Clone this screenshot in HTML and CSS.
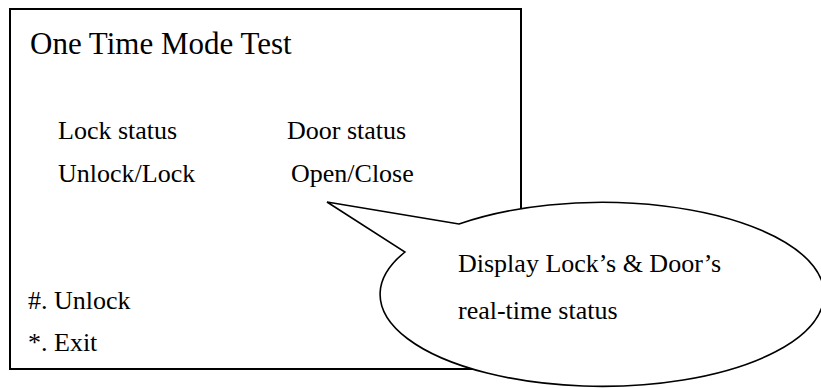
FILE: index.html
```html
<!DOCTYPE html>
<html lang="en">
<head>
<meta charset="utf-8">
<title>One Time Mode Test</title>
<link rel="stylesheet" href="styles.css">
</head>
<body>
<div class="page">
  <div class="screen">
    <div class="title">One Time Mode Test</div>
    <div class="status">
      <div class="cell">Lock status</div>
      <div class="cell">Door status</div>
      <div class="cell">Unlock/Lock</div>
      <div class="cell shift">Open/Close</div>
    </div>
    <div class="keys">
      <div class="key">#. Unlock</div>
      <div class="key">*. Exit</div>
    </div>
  </div>
  <div class="callout">
    <svg class="bubble" width="501" height="193" viewBox="320 195 501 193" aria-hidden="true">
      <path d="M 459 224 L 327 202 L 405 252 A 222 92 0 1 0 459 224 Z" fill="#fff" stroke="#000" stroke-width="1.6" stroke-linejoin="miter"/>
    </svg>
    <div class="note">
      <div class="note-line">Display Lock’s &amp; Door’s</div>
      <div class="note-line">real-time status</div>
    </div>
  </div>
</div>
</body>
</html>
```

FILE: styles.css
```css
html, body {
  margin: 0;
  padding: 0;
  background: #fff;
}

body {
  width: 821px;
  height: 388px;
  overflow: hidden;
  color: #000;
}

.page {
  position: relative;
  box-sizing: border-box;
  width: 821px;
  height: 388px;
  padding: 8px 0 0 9px;
}

.screen {
  box-sizing: border-box;
  width: 513px;
  height: 362px;
  border: 2px solid #000;
  padding: 14px 0 4px 0;
  display: flex;
  flex-direction: column;
}

.title {
  font-family: "Liberation Serif", serif;
  font-size: 31px;
  line-height: 39px;
  padding-left: 19px;
}

.status {
  margin-top: 46px;
  padding-left: 47px;
  display: grid;
  grid-template-columns: 229px auto;
}

.cell {
  font-family: "Liberation Serif", serif;
  font-size: 26px;
  line-height: 43px;
}

.shift {
  padding-left: 4px;
}

.keys {
  margin-top: auto;
  padding-left: 17px;
}

.key {
  font-family: "Liberation Serif", serif;
  font-size: 26px;
  line-height: 42px;
}

.callout {
  position: absolute;
  left: 320px;
  top: 195px;
  width: 501px;
  height: 193px;
  overflow: hidden;
}

.bubble {
  position: absolute;
  left: 0;
  top: 0;
  display: block;
}

.note {
  position: relative;
  padding: 45px 0 0 138px;
  white-space: nowrap;
}

.note-line {
  font-family: "Liberation Serif", serif;
  font-size: 26px;
  line-height: 47px;
}
```
